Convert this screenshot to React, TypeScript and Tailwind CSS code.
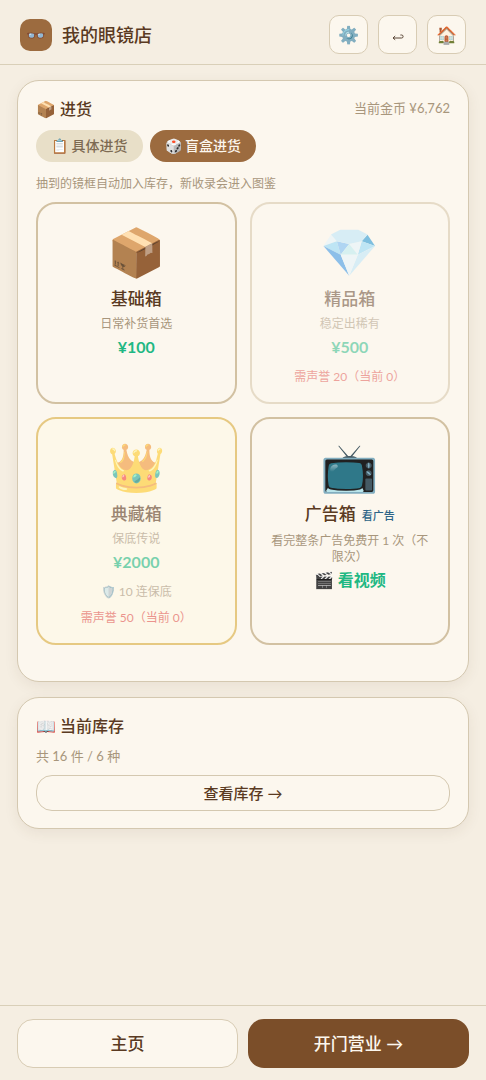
import clsx from 'clsx';

type Box = {
  icon: string;
  name: string;
  tag?: string;
  desc: string;
  price: string;
  pity?: string;
  need?: string;
  gold?: boolean;
};

const boxes: Box[] = [
  { icon: '📦', name: '基础箱', desc: '日常补货首选', price: '¥100' },
  { icon: '💎', name: '精品箱', desc: '稳定出稀有', price: '¥500', need: '需声誉 20（当前 0）' },
  { icon: '👑', name: '典藏箱', desc: '保底传说', price: '¥2000', pity: '🛡️ 10 连保底', need: '需声誉 50（当前 0）', gold: true },
  { icon: '📺', name: '广告箱', tag: '看广告', desc: '看完整条广告免费开 1 次（不限次）', price: '🎬 看视频' },
];

const iconButton =
  'flex size-[39px] items-center justify-center rounded-[10px] border border-[#d8ccb4] bg-[#fcf7ee] text-[17px]';

function BoxCard({ box }: { box: Box }) {
  const locked = Boolean(box.need);

  return (
    <button
      disabled={locked}
      className={clsx(
        'flex flex-col items-center rounded-[20px] border-2 px-4 pt-[17px] pb-[17px] text-center',
        box.gold ? 'border-[#d9ab3c] bg-[#fff9e6]' : 'border-[#d2c1a2] bg-[#fcf7ee]',
        locked && (box.gold ? 'opacity-60' : 'opacity-50'),
      )}
    >
      <span className="text-[47px] leading-[60px]">{box.icon}</span>
      <span className="mt-[6px] text-[17px] leading-6 font-medium">
        {box.name}
        {box.tag && <span className="ml-1.5 text-[11px] text-[#2e6588]">{box.tag}</span>}
      </span>
      <span className="mt-[5px] text-xs leading-4 text-[#a8967c]">{box.desc}</span>
      <span className="mt-[3px] text-base leading-6 font-bold text-[#1fb883]">{box.price}</span>
      {box.pity && <span className="mt-[10px] text-xs leading-4 text-[#a8967c]">{box.pity}</span>}
      {box.need && <span className="mt-[10px] text-xs leading-4 text-[#e0524d]">{box.need}</span>}
    </button>
  );
}

export default function App() {
  return (
    <div className="flex min-h-screen flex-col bg-[#f5eee2] font-[Lato,'Noto_Sans_CJK_SC',sans-serif] text-[#5a3a22]">
      <header className="flex items-center justify-between border-b border-[#d9cfb8] px-5 pt-[15px] pb-[10px]">
        <div className="flex items-center gap-[10px]">
          <span className="flex size-8 items-center justify-center rounded-[10px] bg-[#9c6b3f] text-base">👓</span>
          <h1 className="text-lg font-medium">我的眼镜店</h1>
        </div>
        <div className="flex gap-[10px]">
          <button aria-label="设置" className={iconButton}>⚙️</button>
          <button aria-label="返回" className={iconButton}>
            <svg viewBox="0 0 12 8" className="mt-1 h-2 w-3" fill="none" stroke="#5a4636" strokeWidth="1">
              <path d="M3.2 3 1 5l2.2 1.8M1 5h8.6a1.5 1.5 0 0 0 0-3H8.4" />
            </svg>
          </button>
          <button aria-label="首页" className={iconButton}>🏠</button>
        </div>
      </header>

      <main className="flex flex-1 flex-col gap-[15px] px-[17px] py-[15px]">
        <section className="rounded-[22px] border border-[#d4c8b0] bg-[#fcf7ee] px-[18px] pt-4 pb-9 shadow-[0_4px_14px_rgba(90,58,34,0.08)]">
          <div className="flex items-center justify-between">
            <h2 className="text-base font-medium">📦 进货</h2>
            <span className="text-[13px] text-[#a8967c]">当前金币 ¥6,762</span>
          </div>
          <div className="mt-[9px] flex gap-[7px]">
            <button className="h-8 rounded-full bg-[#e8dfc8] px-[15px] text-sm font-medium text-[#7d6a52]">📋 具体进货</button>
            <button className="h-8 rounded-full bg-[#9c6b3f] px-[15px] text-sm font-medium text-[#fcf7ee]">🎲 盲盒进货</button>
          </div>
          <p className="mt-[14px] text-xs leading-4 text-[#a8967c]">抽到的镜框自动加入库存，新收录会进入图鉴</p>
          <div className="mt-[10px] grid grid-cols-2 gap-[13px]">
            {boxes.map((box) => (
              <BoxCard key={box.name} box={box} />
            ))}
          </div>
        </section>

        <section className="rounded-[22px] border border-[#d4c8b0] bg-[#fcf7ee] px-[18px] pt-4 pb-[17px] shadow-[0_4px_14px_rgba(90,58,34,0.08)]">
          <h2 className="text-base font-medium">📖 当前库存</h2>
          <p className="mt-2 text-[13px] leading-5 text-[#a8967c]">共 16 件 / 6 种</p>
          <button className="mt-[9px] h-9 w-full rounded-2xl border border-[#d4c8b0] text-[15px] font-medium">查看库存 →</button>
        </section>
      </main>

      <footer className="grid grid-cols-2 gap-[10px] border-t border-[#d9cfb8] px-[17px] pt-[13px] pb-3">
        <button className="h-[49px] rounded-2xl border border-[#d8ccb4] bg-[#fcf7ee] text-[17px] font-medium">主页</button>
        <button className="h-[49px] rounded-2xl bg-[#7b4e29] text-[17px] font-medium text-[#fcf7ee]">开门营业 →</button>
      </footer>
    </div>
  );
}
